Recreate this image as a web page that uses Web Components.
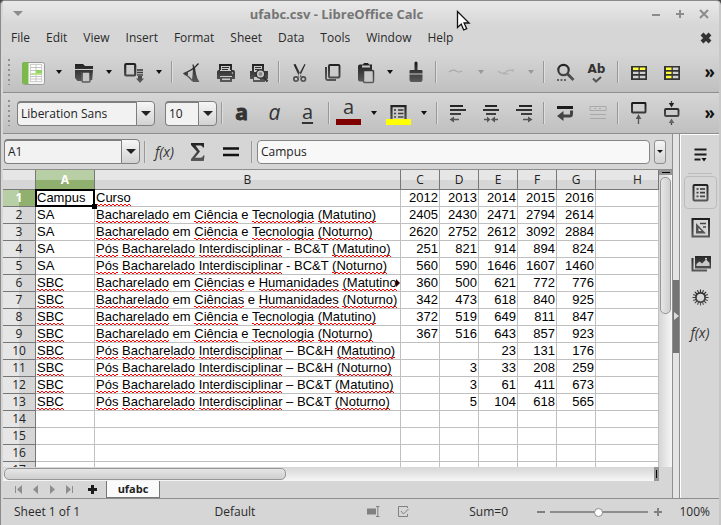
<!DOCTYPE html>
<html lang="en">
<head>
<meta charset="utf-8">
<title>ufabc.csv - LibreOffice Calc</title>
<style>
  html, body { margin: 0; height: 100%; }
  body { background: #4a4a4a; font: 12px/16px "Open Sans", "Noto Sans", sans-serif; color: #2a2a2a; overflow: hidden; }
</style>
</head>
<body>
<calc-window></calc-window>

<script>
const RESET = `
  :host, * { box-sizing: border-box; }
  button { font: inherit; color: inherit; background: none; border: 0; padding: 0; margin: 0; display: flex; align-items: center; justify-content: center; }
`;
const define = (name, html, setup) => customElements.define(name, class extends HTMLElement {
  constructor() {
    super();
    this.attachShadow({ mode: 'open' });
  }
  connectedCallback() {
    if (this.shadowRoot.childNodes.length) return;
    const t = document.createElement('template');
    t.innerHTML = typeof html === 'function' ? html(this) : html;
    this.shadowRoot.append(t.content.cloneNode(true));
    if (setup) setup(this);
  }
});

/* ---------- icons, drawn on a 25 x 25 grid ---------- */
const alignLines = (a, b, c) => `<path class="s" stroke-width="2" d="M${a[0]} 5H${a[1]}M${b[0]} 9H${b[1]}M${c[0]} 13H${c[1]}"/>`;
const ICONS = {
  sheet: `<rect x="1.5" y="2.5" width="22" height="22" rx="2" fill="#f4f4f4" stroke="#9a9a9a"/><path d="M3 2h4v22H3a2 2 0 0 1-2-2V4a2 2 0 0 1 2-2z" fill="#7db84c"/><path d="M7.5 3v21" stroke="#b9dd98"/>
    <rect x="9.5" y="4.500" width="11" height="17" fill="#fff" stroke="#cfcfcf"/><path d="M10 7.500h10M10 10.500h10M10 16.500h10M10 19h10M15 5v16" stroke="#c4c4c4"/><rect x="15" y="10" width="6" height="3.500" fill="#8fd460"/><rect x="10" y="13" width="10" height="2" fill="#b7e08f"/>`,
  folder: `<path class="f" d="M4 4h8l2 2h8v3H4zM4 10h18l-.8 10H17v-8h-6.500v9H6.500L4 18z"/><rect x="11" y="12" width="8" height="10" rx="1" fill="#c6c6c6" class="s" stroke-width="1.500"/>`,
  save: `<rect x="4.200" y="4" width="10" height="11.500" rx="1" class="s" stroke-width="2.200"/><path class="s" stroke-width="1.300" d="M16 10h6M16 12.500h6M16 15h6M17 17h4"/><path class="f" d="M17 16h4v2.500h2L19 23l-4-4.500h2z"/>`,
  pdf: `<path class="s" stroke-width="1.200" d="M4.500 13.500C9 12 14 10 19.500 3.500M4.500 13.500c4 2 7 4.500 9 7.500M14 4.500c1 3 .5 9-.5 16"/><path class="f" d="M14 9l2-2c.5 5 1.500 11 4.500 15h-7c1-4 1-9 .5-13zM4 13.500l5-1.500v3.500z"/>`,
  print: `<path class="f" d="M7 4h13v6H7zM5 12a2 2 0 0 1 2-2h1v1h11v-1h2a2 2 0 0 1 2 2v7h-3v-3H8v3H5zM8 17h12v5H8z"/><path d="M9 6h9v4H9zM10 18.500h8v1.500h-8z" fill="#c9c9c9"/><path d="M10 7.500h7M10 9.500h6" stroke="#333"/><circle cx="20.500" cy="13" r=".8" fill="#ccc"/>`,
  preview: `<path class="f" d="M7 4h12v7H7zM5 11h2v-1h12v1h4v8h-3v3H8v-3H5z"/><path d="M9 6h8v6H9zM9 17h6v3H9z" fill="#c9c9c9"/><path d="M10 7.500h6M10 9.500h4" stroke="#333"/><circle cx="15.500" cy="14" r="4.300" fill="#c8c8c8" stroke="#333" stroke-width="1.500"/><circle cx="15.500" cy="14" r="2" fill="#8a8a8a"/><path d="M18.500 17l4 4.500" stroke="#333" stroke-width="2"/>`,
  cut: `<path class="f" d="M7.500 4.500L9.500 4l6 12-2 1.500zM19.500 4.500L18.500 4l-6.500 12 1.500 1.500z"/><circle cx="10" cy="19" r="2.200" class="s" stroke-width="1.700"/><circle cx="17.300" cy="19" r="2.200" class="s" stroke-width="1.700"/>`,
  copy: `<path class="s" stroke-width="1.800" d="M7 7v11.500q0 1.500 1.500 1.500H17"/><rect x="10" y="5" width="10.500" height="12.500" rx="1" class="s" stroke-width="1.900"/>`,
  paste: `<path class="f" d="M8 4.500h3l1-1.500h4l1 1.500h3v17H8a2 2 0 0 1-2-2V6.500a2 2 0 0 1 2-2z"/><rect x="10" y="5.500" width="8" height="2" fill="#c9c9c9"/><rect x="11.500" y="10.500" width="10" height="12" rx="1" fill="#c8c8c8" class="s" stroke-width="1.500"/>`,
  brush: `<path class="f" d="M12.500 3a1.500 1.500 0 0 1 3 0v7h4q1 0 1 1v2.500h-13V11q0-1 1-1h4zM7.500 14.500h13V20q0 2-2 2h-9q-2 0-2-2z"/>`,
  undo: `<path d="M6 12q4-3 7-1t6 0" fill="none" stroke="#a9a9a9" stroke-width="1.200"/>`,
  redo: `<path d="M5 11q4 4 8 1t7-1V9M10 14h6" fill="none" stroke="#b0b0b0" stroke-width="1.200"/>`,
  find: `<circle cx="12.500" cy="10" r="5.200" class="s" stroke-width="2.200"/><path class="s" stroke-width="2.800" d="M16.500 14l6 6"/><path d="M6 20h2M9.500 20h2M13 20h2" stroke="#444" stroke-width="1.700"/>`,
  tick: `<path class="s" stroke-width="2" d="M9 18.500l3 3 5-4.500"/>`,
  rows: `<rect x="6" y="6" width="16" height="14" fill="#333"/><path d="M8 7.500h5.500v2.500H8zM14.800 7.500h5.500v2.500h-5.500z" fill="#ffff3c"/><path d="M8 11.700h5.500v2.300H8zM14.800 11.700h5.500v2.300h-5.500zM8 15.800h5.500v2.500H8zM14.800 15.800h5.500v2.500h-5.500z" fill="#d0d0d0"/>`,
  cols: `<rect x="6" y="6" width="16" height="14" fill="#333"/><path d="M8 7.500h5.500v2.500H8zM8 11.700h5.500v2.300H8zM8 15.800h5.500v2.500H8z" fill="#ffff3c"/><path d="M14.800 7.500h5.500v2.500h-5.500zM14.800 11.700h5.500v2.300h-5.500zM14.800 15.800h5.500v2.500h-5.500z" fill="#d0d0d0"/>`,
  fontcolor: `<rect x="0" y="18" width="25" height="6" fill="#800000"/>`,
  fill: `<path class="s" stroke-width="2.200" d="M5.500 18V5.200h14V18"/><path class="s" stroke-width="1.600" d="M8 9h2M12 9h5.500M8 12.500h2M12 12.500h5.500M8 16h2M12 16h5.500"/><rect x="0" y="18" width="25" height="6" fill="#ffff00"/>`,
  left: alignLines([6, 19], [6, 22], [6, 17]) + `<path d="M8 18.500h7" stroke="#555" stroke-width="1.500"/><path d="M5.500 18.500L10 15.500v6z" fill="#555"/>`,
  center: alignLines([8, 20], [6, 22], [9, 19]) + `<path d="M7 18.500h3M18 18.500h3" stroke="#555" stroke-width="1.500"/><path d="M13.500 18.500L10 15.500v6zM14 18.500l4-3v6z" fill="#555"/>`,
  right: alignLines([9, 22], [6, 22], [11, 22]) + `<path d="M13 18.500h6" stroke="#555" stroke-width="1.500"/><path d="M22.500 18.500L18 15.500v6z" fill="#555"/>`,
  wrap: `<path d="M6 6.500h16" stroke="#1c1c1c" stroke-width="3"/><path d="M20.500 9.500v3.500q0 2-2 2H11" fill="none" stroke="#444" stroke-width="3"/><path d="M6 15l6.500-5v10z" fill="#444"/>`,
  merge: `<path d="M6 5.500h16v4H6zM10.500 7.500h2M15 7.500h2M6 13.500h16M6 17.500h16" fill="none" stroke="#a9a9a9"/>`,
  insrow: `<rect x="7" y="2" width="13.500" height="9.500" rx=".5" class="s" stroke-width="1.900"/><path d="M13.500 17v6" stroke="#555" stroke-width="1.300"/><path d="M13.500 13l2.800 5h-5.600z" fill="#555"/>`,
  delrow: `<rect x="7" y="8" width="13.500" height="7" rx="1" class="s" stroke-width="1.900"/><path d="M13.500 0v3M13.500 21v3" stroke="#444" stroke-width="1.300"/><path d="M13.500 6.500L10.800 2h5.400z" fill="#222"/><path d="M13.500 17.500l2.800 4.500h-5.600z" fill="#666"/>`,
  sigma: `<path class="f" d="M6 4h13v4.500h-1.200q-.4-2-2.300-2h-5l4.500 6-5 6.300h5.500q2 0 2.800-2.300H19.500L18.800 22H6v-2l6-7.200L6 6z"/>`,
  equals: `<path d="M5 9.500h16M5 16h16" stroke="#111" stroke-width="2.500"/>`,
  menu: `<path d="M6.500 7.500h12M6.500 12.500h12M6.500 17.500h6" stroke="#1c1c1c" stroke-width="2"/><path d="M13.500 16h5l-2.500 3.500z" fill="#111"/>`,
  props: `<rect x="5.500" y="5" width="14" height="15.500" rx="1" class="s" stroke-width="2"/><path class="s" stroke-width="1.700" d="M8.500 9h2M12 9h5M8.500 12.700h2M12 12.700h5M8.500 16.400h2M12 16.400h5"/>`,
  styles: `<rect x="4.500" y="4" width="16.500" height="17.500" class="s" stroke-width="2"/><path d="M8 8v10.500h10z" fill="#555"/><path d="M10.500 13v3h3z" fill="#ddd"/><path d="M12 8.500h6M15 12h3" stroke="#444" stroke-width="1.500"/>`,
  gallery: `<path class="s" stroke-width="2" d="M4.500 8v12.500H19"/><path class="f" d="M7 6h16v12.500H7z"/><path d="M8.500 16v-2l3-2.500 2.500 2 4-4 3.500 3.500v3z" fill="#c9c9c9"/><circle cx="18" cy="8.700" r="1" fill="#ddd"/>`,
  gear: `<circle cx="12.500" cy="12.500" r="4.600" class="s" stroke-width="1.800"/><path class="s" stroke-width="2" d="M12.500 7.500V4.500M12.500 17.500v3M7.500 12.500h-3M17.500 12.500h3M9 9L6.800 6.800M16 16l2.200 2.200M9 16l-2.200 2.200M16 9l2.200-2.200M10.600 7.900L9.500 5.200M14.400 17.100l1.100 2.700M14.400 7.900l1.100-2.700M10.600 17.100l-1.100 2.700M7.900 10.600L5.200 9.500M17.100 14.400l2.700 1.100M7.900 14.400l-2.700 1.100M17.100 10.600l2.700-1.100" style="stroke-width:1.100"/>`,
};
define('calc-icon', el => `
  <style>:host{display:block;width:25px;height:25px} svg{display:block} .f{fill:url(#ink)} .s{stroke:url(#ink)} .s:not([fill]){fill:none}</style>
  <svg width="25" height="25" viewBox="0 0 25 25" aria-hidden="true">
    <defs><linearGradient id="ink" gradientUnits="userSpaceOnUse" x1="0" y1="2" x2="0" y2="23"><stop offset="0" stop-color="#1a1a1a"/><stop offset="1" stop-color="#5e5e5e"/></linearGradient></defs>
    ${ICONS[el.getAttribute('name')] || ''}
  </svg>`);

/* ---------- toolbar parts ---------- */
define('tool-button', el => {
  const n = el.getAttribute('icon'), off = el.hasAttribute('off');
  return `<style>${RESET}
    :host { display: flex; flex: none; }
    .b { width: 33px; height: 33px; display: grid; grid-template: 33px / 33px; }
    calc-icon, ::slotted(*) { grid-area: 1 / 1; place-self: center; }
    .d { width: 17px; height: 33px; }
    .d i { border: 4px solid transparent; border-top-color: ${off ? '#999' : '#111'}; border-bottom: 0; border-left-width: 3px; border-right-width: 3px; }
  </style>
  <button class="b" aria-label="${el.getAttribute('label')}"${off ? ' disabled' : ''}>${n ? `<calc-icon name="${n}"></calc-icon>` : ''}<slot></slot></button>
  ${el.hasAttribute('menu') ? `<button class="d" aria-label="${el.getAttribute('label')} options"${off ? ' disabled' : ''}><i></i></button>` : ''}`;
});
define('tool-sep', `<style>:host{box-sizing:border-box;display:block;flex:none;width:8px;height:22px;padding-left:4px} i{display:block;width:2px;height:100%;background:linear-gradient(90deg,#989898 50%,#dedede 50%)}</style><i></i>`);
define('tool-bar', `<style>
  :host { box-sizing: border-box; display: flex; align-items: center; height: 41px; flex: none; padding-right: 4px; background: linear-gradient(#d6d6d6, #c0c0c0); border-bottom: 1px solid #8e8e8e; overflow: hidden; }
  .grip { width: 2px; height: 26px; margin: 0 7px 0 5px; flex: none; background: repeating-linear-gradient(#909090 0 2px, transparent 2px 5px); }
  .more { margin-left: auto; font: bold 17px/20px "Open Sans", sans-serif; color: #111; background: none; border: 0; padding: 0; }
</style><i class="grip"></i><slot></slot><button class="more" aria-label="More">»</button>`);
define('combo-box', el => `<style>${RESET}
  :host { display: flex; flex: none; height: 25px; }
  input { flex: 1; min-width: 0; font: inherit; color: #222; border: 1px solid #7e7e7e; border-top-width: 2px; border-right: 0; border-radius: 4px 0 0 4px; padding: 0 0 0 3px; background: #f2f2f2; outline: 0; }
  button { width: 19px; border: 1px solid #7e7e7e; border-radius: 0 4px 4px 0; background: linear-gradient(#f6f6f6, #d2d2d2); }
  i { border: 5px solid transparent; border-top-color: #222; border-bottom: 0; }
</style><input aria-label="${el.getAttribute('label')}" value="${el.getAttribute('value')}"><button aria-label="${el.getAttribute('label')} list"><i></i></button>`);

/* ---------- title and menu ---------- */
define('title-bar', `<style>${RESET}
  :host { display: flex; align-items: center; height: 25px; flex: none; padding: 0 3px 0 10px; background: linear-gradient(#e9e9e9, #d6d6d6); color: #8c8c8c; }
  h1 { flex: 1; margin: 0; padding-left: 6px; text-align: center; font: bold 13px/18px "Open Sans", "Noto Sans", sans-serif; color: #757575; }
  i { border: 5px solid transparent; border-top-color: #8c8c8c; border-bottom: 0; }
  .w { width: 24px; height: 20px; }
  .m { width: 10px; height: 16px; }
  svg { stroke: currentColor; stroke-width: 2; fill: none; }
</style>
<button class="m" aria-label="Window menu"><i></i></button><h1><slot></slot></h1>
<button class="w" aria-label="Minimize"><svg width="10" height="10"><path d="M1 6h8"/></svg></button>
<button class="w" aria-label="Maximize"><svg width="10" height="10"><path d="M1 5h8M5 1v8"/></svg></button>
<button class="w" aria-label="Close"><svg width="10" height="10"><path d="M1 1l8 8M9 1L1 9"/></svg></button>`);
define('menu-bar', `<style>${RESET}
  :host { display: flex; align-items: center; height: 26px; flex: none; padding: 0 7px 2px 8px; }
  nav { display: flex; gap: 16px; flex: 1; }
  svg { stroke: #333; stroke-width: 4; fill: none; }
</style>
<nav>${['File','Edit','View','Insert','Format','Sheet','Data','Tools','Window','Help'].map(t => `<button>${t}</button>`).join('')}</nav>
<button aria-label="Close document"><svg width="12" height="12"><path d="M2 2l8 8M10 2l-8 8"/></svg></button>`);

/* ---------- formula bar ---------- */
define('formula-bar', `<style>${RESET}
  :host { display: flex; align-items: center; height: 36px; flex: none; border-bottom: 1px solid #8e8e8e; padding: 0 6px 0 1px; }
  combo-box { width: 136px; }
  .fx { font: italic 14px/20px "Open Sans", sans-serif; color: #333; }
  input { flex: 1; min-width: 0; height: 24px; margin-left: 2px; font: inherit; color: #222; border: 1px solid #868686; border-radius: 4px; padding: 0 3px; background: #f8f8f8; outline: 0; }
  .x { width: 12px; height: 24px; margin-left: 4px; border: 1px solid #8e8e8e; border-radius: 3px; background: linear-gradient(#f6f6f6, #d2d2d2); }
  .x i { border: 3px solid transparent; border-top-color: #111; border-bottom: 0; }
</style>
<combo-box label="Name Box" value="A1"></combo-box><tool-sep></tool-sep>
<tool-button label="Function Wizard"><span class="fx">f(x)</span></tool-button><tool-button label="Sum" icon="sigma"></tool-button><tool-button label="Function" icon="equals"></tool-button><tool-sep></tool-sep>
<input aria-label="Input line" value="Campus"><button class="x" aria-label="Expand"><i></i></button>`);

/* ---------- sheet ---------- */
const M = '(Matutino)', N = '(Noturno)', CT = 'Bacharelado em Ciência e Tecnologia ', CH = 'Bacharelado em Ciências e Humanidades ', PI = 'Pós Bacharelado Interdisciplinar ';
const DATA = [
  ['Campus', 'Curso', 2012, 2013, 2014, 2015, 2016],
  ['SA', CT + M, 2405, 2430, 2471, 2794, 2614],
  ['SA', CT + N, 2620, 2752, 2612, 3092, 2884],
  ['SA', PI + '- BC&T ' + M, 251, 821, 914, 894, 824],
  ['SA', PI + '- BC&T ' + N, 560, 590, 1646, 1607, 1460],
  ['SBC', CH + '(Matutino', 360, 500, 621, 772, 776],
  ['SBC', CH + N, 342, 473, 618, 840, 925],
  ['SBC', CT + M, 372, 519, 649, 811, 847],
  ['SBC', CT + N, 367, 516, 643, 857, 923],
  ['SBC', PI + '– BC&H ' + M, '', '', 23, 131, 176],
  ['SBC', PI + '– BC&H ' + N, '', 3, 33, 208, 259],
  ['SBC', PI + '– BC&T ' + M, '', 3, 61, 411, 673],
  ['SBC', PI + '– BC&T ' + N, '', 5, 104, 618, 565],
  [], [], [], [],
];
const KNOWN = new Set(['Campus', 'SA', 'em', 'e', '-', '–', 'BC&T', 'BC&H']);
const spell = s => s.split(' ').map(w => !w || KNOWN.has(w) ? w.replace('&', '&amp;') : `<u>${w}</u>`).join(' ');
define('sheet-grid', () => `<style>
  :host { display: block; overflow: hidden; background: #fff; }
  table { table-layout: fixed; border-collapse: separate; border-spacing: 0; width: 100%; font: 13px/16px "Liberation Sans", Arial, sans-serif; color: #000; }
  td, th { box-sizing: border-box; height: 17px; padding: 0 1px; border: solid #c0c0c0; border-width: 0 1px 1px 0; white-space: nowrap; }
  td.n { text-align: right; }
  th { font: 12px/16px "Open Sans", "Noto Sans", sans-serif; color: #222; border-color: #777; background: linear-gradient(90deg, #e6e6e6 50%, #d6d6d6 50%); }
  thead th { height: 20px; background: linear-gradient(#e6e6e6 50%, #d6d6d6 50%); }
  thead th:last-child { padding-left: 22px; }
  thead th.sel { background: linear-gradient(#b8cfa6 50%, #8fb06e 50%); color: #fff; font-weight: bold; }
  tbody th.sel { background: linear-gradient(90deg, #b8cfa6 50%, #8fb06e 50%); color: #fff; font-weight: bold; }
  td.cur { position: relative; }
  td.cur::before { content: ""; position: absolute; inset: -1px; border: 2px solid #000; }
  td.cur::after { content: ""; position: absolute; right: -3px; bottom: -3px; width: 5px; height: 5px; background: #000; }
  td.clip { position: relative; }
  td.clip::after { content: ""; position: absolute; right: 0; top: 4px; border: 4px solid transparent; border-left-color: #200; border-right: 0; }
  u { text-decoration: none; padding-bottom: 1px; background: url("data:image/svg+xml,%3Csvg xmlns='http://www.w3.org/2000/svg' width='4' height='2'%3E%3Cpath d='M0 0h2v1H0zM2 1h2v1H2z' fill='red'/%3E%3C/svg%3E") repeat-x left bottom; }
</style>
<table aria-label="ufabc">
  <colgroup><col style="width:33px"><col style="width:59px"><col style="width:306px">${'<col style="width:39px">'.repeat(5)}<col></colgroup>
  <thead><tr><th></th>${[...'ABCDEFGH'].map((c, i) => `<th scope="col"${i ? '' : ' class="sel"'}>${c}</th>`).join('')}</tr></thead>
  <tbody>${DATA.map((r, y) => `<tr><th scope="row"${y ? '' : ' class="sel"'}>${y + 1}</th>${Array.from({ length: 8 }, (_, x) => {
    const v = r[x] ?? '';
    const cls = x > 1 ? 'n' : !x && !y ? 'cur' : x === 1 && y === 5 ? 'clip' : '';
    return `<td class="${cls}">${x < 2 ? spell(String(v)) : v}</td>`;
  }).join('')}</tr>`).join('')}</tbody>
</table>`);
define('scroll-track', `<style>
  :host { display: flex; background: linear-gradient(90deg, #d6d6d6, #f6f6f6); flex-direction: column; padding: 0 1px; }
  :host([row]) { flex-direction: row; background: linear-gradient(#d6d6d6, #f6f6f6); padding: 1px 0; }
  .thumb { box-sizing: border-box; flex: 0 0 46%; margin-top: 2px; border: 1px solid #979797; border-radius: 5px; background: linear-gradient(90deg, #e6e6e6, #cfcfcf); }
  .cap { height: 5px; margin: 0 -1px; background: #969696; display: grid; place-items: center; }
  .cap::before { content: ""; width: 8px; height: 1px; background: #000; }
  :host([row]) .thumb { flex-basis: 43%; margin: 0 0 0 1px; background: linear-gradient(#e6e6e6, #cfcfcf); }
  :host([row]) .cap { order: 2; width: 5px; height: auto; margin: -1px 0 -1px auto; }
  :host([row]) .cap::before { width: 1px; height: 8px; }
</style><div class="cap"></div><div class="thumb"></div>`);
define('sheet-tabs', `<style>${RESET}
  :host { display: flex; height: 17px; flex: none; padding-left: 7px; color: #8e8e8e; }
  button.n { width: 17px; }
  .add { width: 20px; margin: 0 4px 0 4px; color: #1c1c1c; }
  .tab { width: 54px; border: 1px solid #777; border-top: 0; background: #fafafa; font-weight: bold; font-size: 11px; color: #222; height: 17px; }
  svg { fill: currentColor; }
</style>
<button class="n" aria-label="First sheet"><svg width="9" height="9"><path d="M1 1h1v7H1zM8 0v9L3 4.500z"/></svg></button>
<button class="n" aria-label="Previous sheet"><svg width="9" height="9"><path d="M7 0v9L2 4.500z"/></svg></button>
<button class="n" aria-label="Next sheet"><svg width="9" height="9"><path d="M2 0v9l5-4.500z"/></svg></button>
<button class="n" aria-label="Last sheet"><svg width="9" height="9"><path d="M7 1h1v7H7zM1 0v9l5-4.500z"/></svg></button>
<button class="add" aria-label="Add sheet"><svg width="9" height="9"><path d="M3 0h3v3h3v3H6v3H3V6H0V3h3z"/></svg></button>
<button class="tab"><slot></slot></button>`);

/* ---------- sidebar ---------- */
define('side-bar', `<style>${RESET}
  :host { display: flex; flex: none; }
  .sash { width: 8px; display: flex; flex-direction: column; justify-content: center; border: solid #8e8e8e; border-width: 0 1px; background: #e4e4e4; }
  .sash button { height: 73px; background: #747474; }
  .sash i { border: 4px solid transparent; border-left: 5px solid #ddd; border-right: 0; }
  nav { width: 39px; display: flex; flex-direction: column; align-items: center; gap: 2px; padding-top: 3px; border-top: 1px solid #fff; border-left: 1px solid #fff; }
  nav button { width: 33px; height: 33px; border: 1px solid transparent; border-radius: 4px; }
  nav button.on { border-color: #bcbcbc; }
  hr { width: 24px; height: 1px; border: 0; background: #bcbcbc; margin: 0; }
  .fx { font: italic 14px/20px "Open Sans", sans-serif; color: #333; }
</style>
<div class="sash"><button aria-label="Hide sidebar"><i></i></button></div>
<nav aria-label="Sidebar decks">
  <button aria-label="Sidebar settings"><calc-icon name="menu"></calc-icon></button><hr>
  <button class="on" aria-label="Properties"><calc-icon name="props"></calc-icon></button>
  <button aria-label="Styles"><calc-icon name="styles"></calc-icon></button>
  <button aria-label="Gallery"><calc-icon name="gallery"></calc-icon></button>
  <button aria-label="Navigator"><calc-icon name="gear"></calc-icon></button>
  <button aria-label="Functions"><span class="fx">f(x)</span></button>
</nav>`);

/* ---------- status bar ---------- */
define('status-bar', `<style>${RESET}
  :host { display: grid; grid-template-columns: 200fr 152fr 31fr 71fr 67fr auto auto; align-items: center; height: 27px; flex: none; padding: 0 9px 0 11px; border-top: 1px solid #8e8e8e; }
  svg { display: block; fill: none; stroke: #808080; }
  .zoom { display: flex; align-items: center; gap: 5px; padding-right: 17px; }
  .zoom button { width: 9px; height: 16px; }
  .zoom path { stroke-width: 2; }
  input { appearance: none; width: 98px; height: 16px; margin: 0; background: linear-gradient(#8c8c8c, #8c8c8c) center / 100% 2px no-repeat; }
  input::-webkit-slider-thumb { appearance: none; width: 9px; height: 9px; border-radius: 50%; background: #fff; border: 1px solid #8c8c8c; }
</style>
<span>Sheet 1 of 1</span><span>Default</span>
<svg width="13" height="12"><path d="M0 2.500h9v6H0z" fill="#808080" stroke="none"/><path d="M9 .5h3.500M9 10.500h3.500M10.800 .5v10"/></svg>
<svg width="12" height="12"><path d="M9.500 2V.5h-9v10h9V8M3 5l2.500 3 5-5"/></svg>
<span>Sum=0</span>
<div class="zoom"><button aria-label="Zoom out"><svg width="8" height="8"><path d="M0 4h8"/></svg></button><input type="range" aria-label="Zoom" min="0" max="200" value="98"><button aria-label="Zoom in"><svg width="8" height="8"><path d="M0 4h8M4 0v8"/></svg></button></div>
<span>100%</span>`);

/* ---------- window ---------- */
define('calc-window', `<style>
  :host { display: flex; flex-direction: column; position: relative; height: 100vh; min-height: 360px; box-sizing: border-box; background: #d6d6d6; border: solid #8a8a8a; border-width: 1px 2px 0 1px; border-right-color: #c8c8c8; border-radius: 5px 5px 0 0; padding-left: 2px; overflow: hidden; }
  .main { flex: 1; min-height: 0; display: flex; }
  .doc { flex: 1; min-width: 0; display: flex; flex-direction: column; }
  .sheet { flex: 1; min-height: 0; display: grid; grid-template: minmax(0, 1fr) 14px / minmax(0, 1fr) 13px; }
  .gap { width: 10px; flex: none; }
  .a { font-size: 21px; line-height: 22px; color: #333; padding-bottom: 2px; }
  b.a { -webkit-text-stroke: 1px #333; }
  .small { font-size: 20px; padding-bottom: 13px; }
  .ab { font: bold 12px/12px "DejaVu Sans", sans-serif; color: #333; padding-bottom: 6px; }
  .u { font-size: 20px; text-decoration: underline; text-decoration-thickness: 2px; text-underline-offset: 3px; }
  .pointer { position: absolute; left: 455px; top: 9px; }
</style>
<title-bar>ufabc.csv - LibreOffice Calc</title-bar>
<menu-bar></menu-bar>
<tool-bar role="toolbar" aria-label="Standard">
  <tool-button icon="sheet" label="New" menu></tool-button><tool-button icon="folder" label="Open" menu></tool-button><tool-button icon="save" label="Save" menu></tool-button><tool-sep></tool-sep>
  <tool-button icon="pdf" label="Export as PDF"></tool-button><tool-button icon="print" label="Print"></tool-button><tool-button icon="preview" label="Print preview"></tool-button><tool-sep></tool-sep>
  <tool-button icon="cut" label="Cut"></tool-button><tool-button icon="copy" label="Copy"></tool-button><tool-button icon="paste" label="Paste" menu></tool-button><tool-button icon="brush" label="Clone formatting"></tool-button><tool-sep></tool-sep>
  <tool-button icon="undo" label="Undo" menu off></tool-button><tool-button icon="redo" label="Redo" menu off></tool-button><tool-sep></tool-sep>
  <tool-button icon="find" label="Find and replace"></tool-button><tool-button icon="tick" label="Spelling"><span class="ab">Ab</span></tool-button><tool-sep></tool-sep>
  <tool-button icon="rows" label="Row"></tool-button><tool-button icon="cols" label="Column"></tool-button>
</tool-bar>
<tool-bar role="toolbar" aria-label="Formatting">
  <combo-box style="width:138px" label="Font name" value="Liberation Sans"></combo-box><i class="gap"></i><combo-box style="width:52px" label="Font size" value="10"></combo-box><tool-sep></tool-sep>
  <tool-button label="Bold"><b class="a">a</b></tool-button><tool-button label="Italic"><em class="a">a</em></tool-button><tool-button label="Underline"><span class="a u">a</span></tool-button><tool-sep></tool-sep>
  <tool-button icon="fontcolor" label="Font color" menu><span class="a small">a</span></tool-button><tool-button icon="fill" label="Background color" menu></tool-button><tool-sep></tool-sep>
  <tool-button icon="left" label="Align left"></tool-button><tool-button icon="center" label="Center"></tool-button><tool-button icon="right" label="Align right"></tool-button><tool-sep></tool-sep>
  <tool-button icon="wrap" label="Wrap text"></tool-button><tool-button icon="merge" label="Merge cells" off></tool-button><tool-sep></tool-sep>
  <tool-button icon="insrow" label="Align top"></tool-button><tool-button icon="delrow" label="Center vertically"></tool-button>
</tool-bar>
<div class="main">
  <div class="doc">
    <formula-bar></formula-bar>
    <div class="sheet"><sheet-grid></sheet-grid><scroll-track></scroll-track><scroll-track row></scroll-track></div>
    <sheet-tabs>ufabc</sheet-tabs>
  </div>
  <side-bar></side-bar>
</div>
<status-bar></status-bar>
<svg class="pointer" width="15" height="22" aria-hidden="true"><path d="M1.500 1.500v16l3.700-3.500 2.500 6 3-1.300-2.600-5.700h5z" fill="#fff" stroke="#111" stroke-width="1.300"/></svg>`);
</script>
</body>
</html>
